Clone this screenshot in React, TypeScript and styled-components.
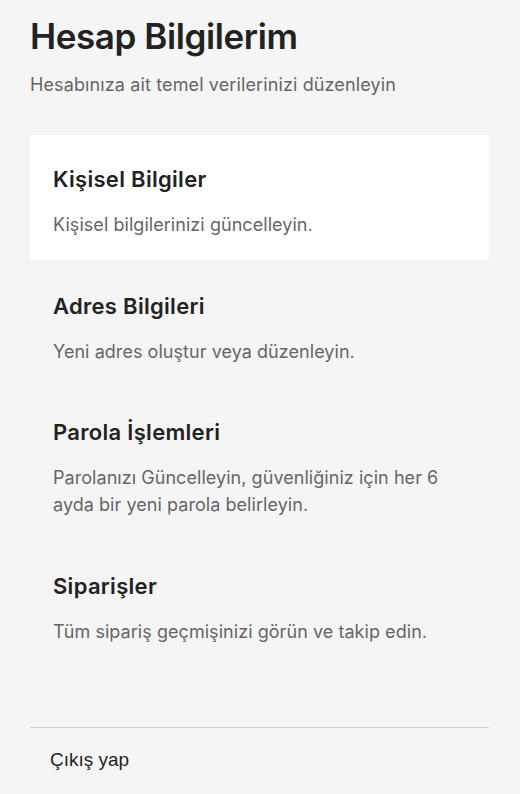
import React from 'react';
import styled, { createGlobalStyle } from 'styled-components';

interface Section {
  id: string;
  title: string;
  description: string;
}

const GlobalStyle = createGlobalStyle`
  html, body {
    margin: 0;
    padding: 0;
    background-color: #f5f5f5;
  }
  * {
    box-sizing: border-box;
  }
`;

const Page = styled.div`
  min-height: 100vh;
  padding: 14px 31px 0 30px;
  font-family: 'Inter', 'Noto Sans', sans-serif;
  background-color: #f5f5f5;
  display: flex;
  flex-direction: column;
`;

const PageTitle = styled.h1`
  margin: 0;
  font-size: 35px;
  line-height: 44px;
  font-weight: 600;
  color: #222222;
  letter-spacing: -0.4px;
`;

const PageSubtitle = styled.p`
  margin: 13px 0 0;
  font-size: 18px;
  line-height: 27px;
  color: #666666;
  letter-spacing: 0.12px;
`;

const SectionList = styled.ul`
  list-style: none;
  margin: 37px 0 0;
  padding: 0;
  display: flex;
  flex-direction: column;
  gap: 1.5px;
`;

const SectionItem = styled.li<{ $active?: boolean }>`
  padding: 31px 23px 22px;
  background-color: ${(p) => (p.$active ? '#ffffff' : 'transparent')};
  cursor: pointer;
  display: flex;
  flex-direction: column;
  gap: 18px;
`;

const SectionTitle = styled.h3`
  margin: 0;
  font-size: 22px;
  line-height: 27px;
  font-weight: 600;
  color: #222222;
  letter-spacing: 0.3px;
`;

const SectionText = styled.p`
  margin: 0;
  font-size: 18px;
  line-height: 27px;
  color: #666666;
  letter-spacing: 0.05px;
`;

const Footer = styled.div`
  margin-top: 60px;
  border-top: 1.5px solid #cccccc;
  padding: 19px 0 0;
`;

const LogoutButton = styled.button`
  background: none;
  border: none;
  padding: 0 20px;
  font-family: 'Liberation Sans', Arial, sans-serif;
  font-size: 19px;
  line-height: 26px;
  color: #1f1f1f;
  cursor: pointer;
`;

const sections: Section[] = [
  {
    id: 'personal',
    title: 'Kişisel Bilgiler',
    description: 'Kişisel bilgilerinizi güncelleyin.',
  },
  {
    id: 'address',
    title: 'Adres Bilgileri',
    description: 'Yeni adres oluştur veya düzenleyin.',
  },
  {
    id: 'password',
    title: 'Parola İşlemleri',
    description:
      'Parolanızı Güncelleyin, güvenliğiniz için her 6 ayda bir yeni parola belirleyin.',
  },
  {
    id: 'orders',
    title: 'Siparişler',
    description: 'Tüm sipariş geçmişinizi görün ve takip edin.',
  },
];

const App: React.FC = () => {
  const activeId = 'personal';

  return (
    <>
      <GlobalStyle />
      <Page>
        <PageTitle>Hesap Bilgilerim</PageTitle>
        <PageSubtitle>Hesabınıza ait temel verilerinizi düzenleyin</PageSubtitle>

        <SectionList>
          {sections.map((s) => (
            <SectionItem key={s.id} $active={s.id === activeId}>
              <SectionTitle>{s.title}</SectionTitle>
              <SectionText>{s.description}</SectionText>
            </SectionItem>
          ))}
        </SectionList>

        <Footer>
          <LogoutButton>Çıkış yap</LogoutButton>
        </Footer>
      </Page>
    </>
  );
};

export default App;
